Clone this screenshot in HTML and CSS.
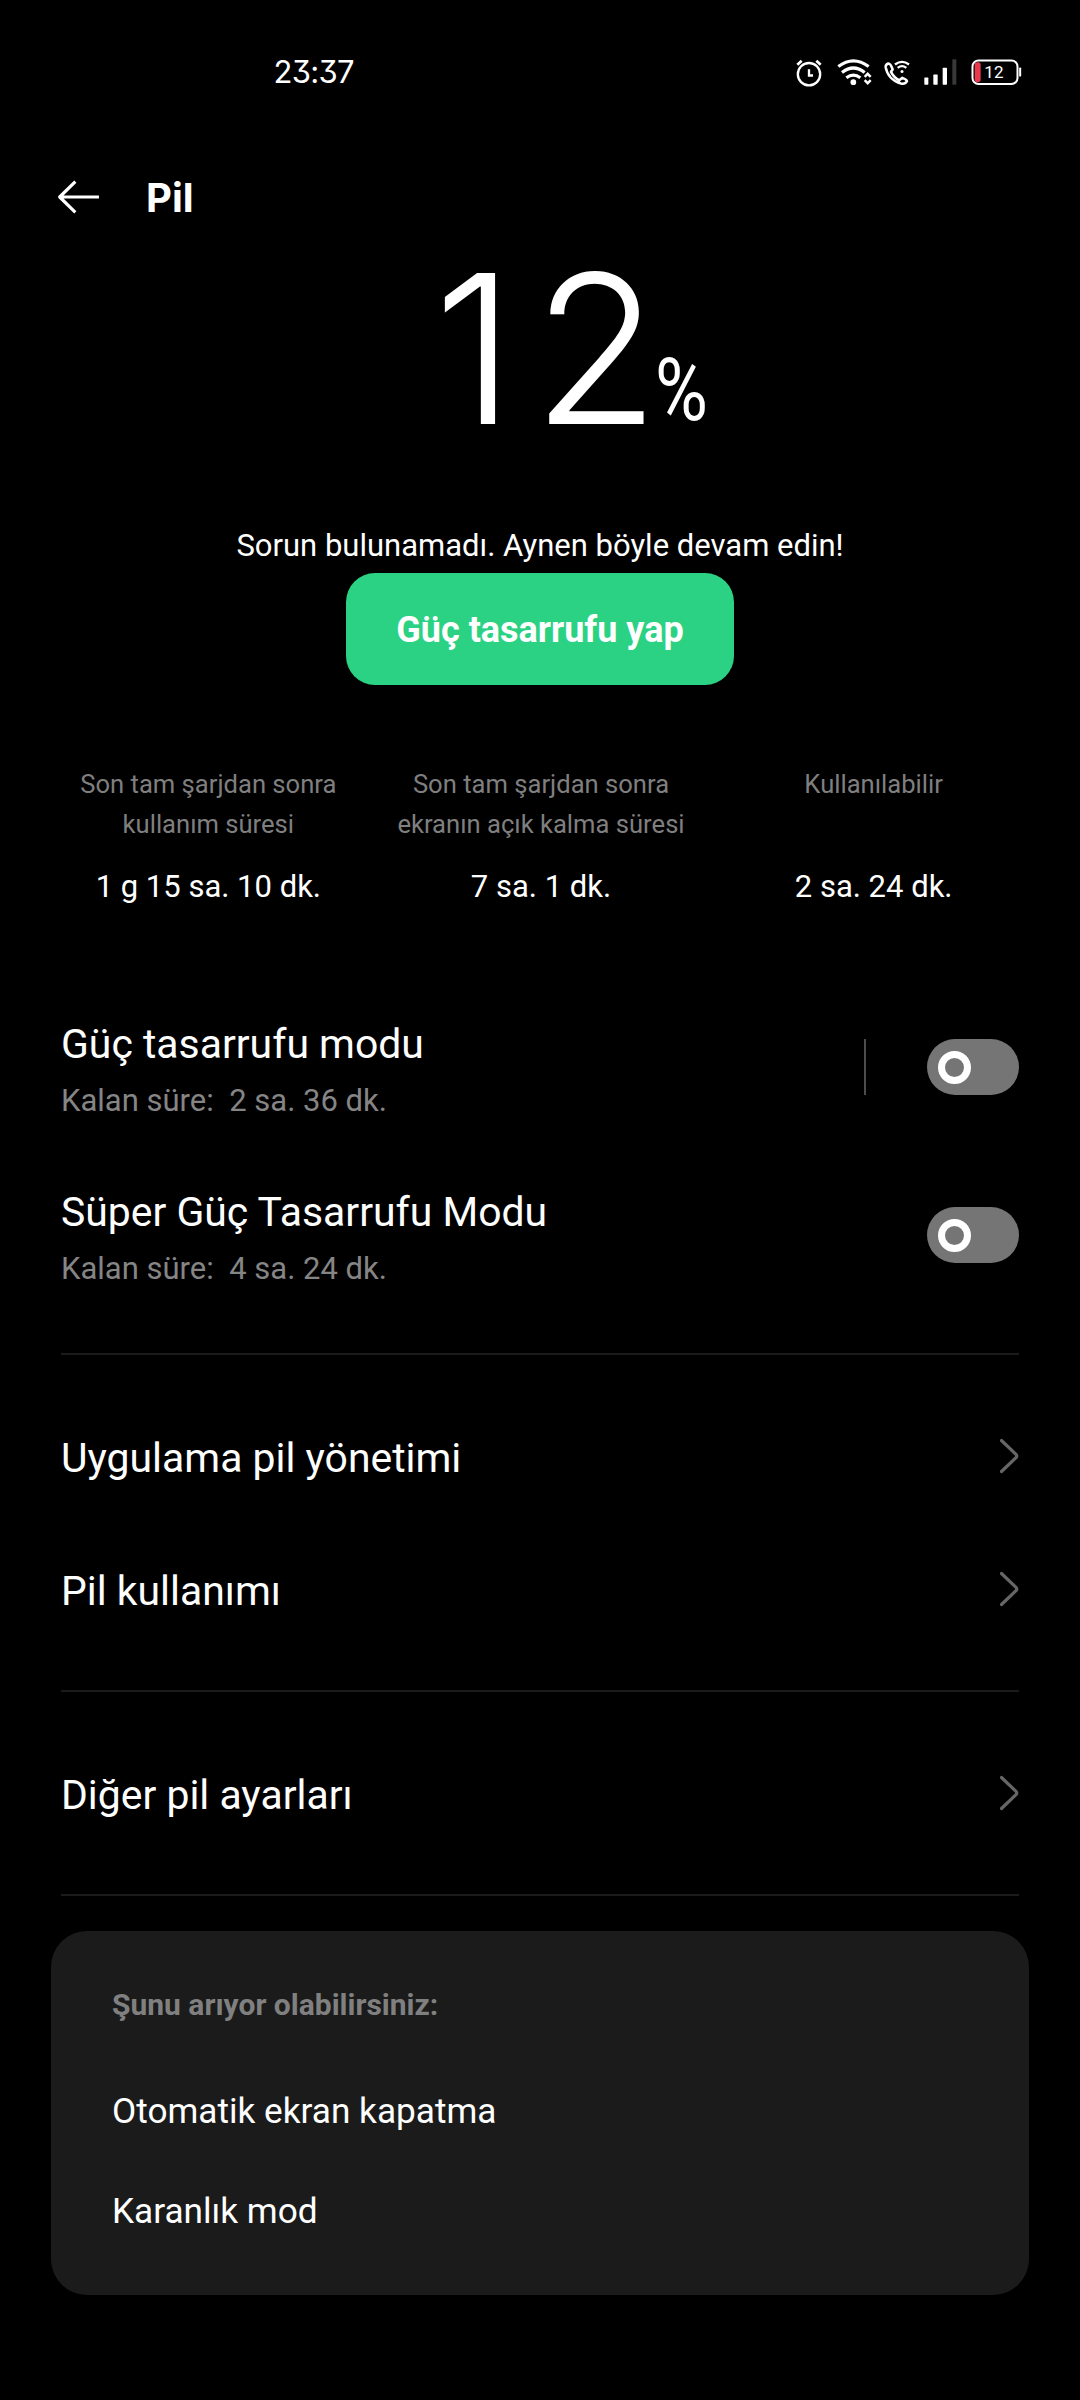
FILE: index.html
```html
<!DOCTYPE html>
<html lang="tr">
<head>
<meta charset="utf-8">
<title>Pil</title>
<link rel="stylesheet" href="styles.css">
</head>
<body>
<div class="status">
  <span class="clock">23:37</span>
  <div class="status-icons">
    <svg class="alarm" viewBox="44 46.5 84 96" fill="none" stroke="#fff" stroke-width="7">
      <circle cx="86" cy="101" r="33.5"/>
      <path d="M51 73l13-12M121 73l-13-12" stroke-width="8"/>
      <path d="M86 86v19h12" stroke-width="7"/>
    </svg>
    <svg class="wifi" viewBox="167 46.5 111 96" fill="none" stroke="#fff" stroke-width="9.5">
      <path d="M174 78Q219 44 265 78M185 96Q219 69 253 96M198 112Q219 96 240 112"/>
      <circle cx="219" cy="125" r="8.5" fill="#fff" stroke="none"/>
      <path d="M253 109l9-9 9 9M253 119l9 9 9-9" stroke-width="7.5"/>
    </svg>
    <svg class="call" viewBox="308 46.5 84 96" fill="none" stroke="#fff" stroke-width="7.5" stroke-linejoin="round">
      <path d="M324 69Q315 72 316 80C320 103 337 122 362 129Q374 132 380 122Q379 117 366 112L357 119Q341 112 332 94L337 87Q331 69 324 69Z"/>
      <path d="M344 72Q365 56 386 72M352 82Q365 72 378 82" stroke-width="7"/>
      <circle cx="365" cy="93" r="4.5" fill="#fff" stroke="none"/>
    </svg>
    <svg class="signal" viewBox="428 46.5 102 96" fill="#fff">
      <rect x="432" y="111" width="12" height="21.500" rx="2"/>
      <rect x="459" y="102" width="13" height="30.500" rx="2"/>
      <rect x="487" y="82" width="13" height="50.500" rx="2"/>
      <rect x="516" y="56" width="12" height="76.500" rx="2" fill="#383838"/>
    </svg>
    <svg class="battery" viewBox="572 46.5 153 96">
      <rect x="576.500" y="60" width="135" height="70.500" rx="18" fill="none" stroke="#fff" stroke-width="6"/>
      <rect x="583" y="65" width="18" height="60" rx="8" fill="#e8394d"/>
      <rect x="716.500" y="81" width="6" height="27" rx="2.500" fill="#fff"/>
      <text class="battery-level" x="612" y="111">12</text>
    </svg>
  </div>
</div>
<header class="bar">
  <svg class="back" viewBox="172 418 130 108" fill="none" stroke="#fff" stroke-width="9.5" stroke-linejoin="round">
    <path d="M298 472H181M227 426L180 472L227 518"/>
  </svg>
  <h1>Pil</h1>
</header>
<main>
  <div class="level">12<span class="percent">%</span></div>
  <p class="message">Sorun bulunamadı. Aynen böyle devam edin!</p>
  <button class="save">Güç tasarrufu yap</button>
  <div class="stats">
    <div class="stat"><p class="stat-label">Son tam şarjdan sonra<br>kullanım süresi</p><p class="stat-value">1 g 15 sa. 10 dk.</p></div>
    <div class="stat"><p class="stat-label">Son tam şarjdan sonra<br>ekranın açık kalma süresi</p><p class="stat-value">7 sa. 1 dk.</p></div>
    <div class="stat"><p class="stat-label">Kullanılabilir</p><p class="stat-value">2 sa. 24 dk.</p></div>
  </div>
  <section class="modes">
    <div class="mode">
      <div class="mode-text"><p class="mode-title">Güç tasarrufu modu</p><p class="mode-sub">Kalan süre:&nbsp; 2 sa. 36 dk.</p></div>
      <span class="separator"></span>
      <span class="toggle"><span class="knob"></span></span>
    </div>
    <div class="mode">
      <div class="mode-text"><p class="mode-title">Süper Güç Tasarrufu Modu</p><p class="mode-sub">Kalan süre:&nbsp; 4 sa. 24 dk.</p></div>
      <span class="toggle"><span class="knob"></span></span>
    </div>
  </section>
  <section class="links">
    <div class="link"><span>Uygulama pil yönetimi</span><svg class="chevron" viewBox="0 0 19 36"><path d="M1.500 2.500L16 16.300Q17.500 18 16 19.700L1.500 33.500"/></svg></div>
    <div class="link"><span>Pil kullanımı</span><svg class="chevron" viewBox="0 0 19 36"><path d="M1.500 2.500L16 16.300Q17.500 18 16 19.700L1.500 33.500"/></svg></div>
  </section>
  <section class="links">
    <div class="link"><span>Diğer pil ayarları</span><svg class="chevron" viewBox="0 0 19 36"><path d="M1.500 2.500L16 16.300Q17.500 18 16 19.700L1.500 33.500"/></svg></div>
  </section>
  <section class="suggestions">
    <h2>Şunu arıyor olabilirsiniz:</h2>
    <p>Otomatik ekran kapatma</p>
    <p>Karanlık mod</p>
  </section>
</main>
</body>
</html>
```
FILE: styles.css
```css
* { box-sizing: border-box; margin: 0; padding: 0; }
body { width: 1080px; height: 2400px; background: #000; color: #fff; font-family: Roboto, sans-serif; overflow: hidden; }
svg { display: block; flex: none; }

.status { height: 143px; display: flex; align-items: center; justify-content: space-between; padding: 0 58.3px 0 273.5px; }
.clock { font: 400 31px/40px Inter, sans-serif; font-feature-settings: "cv09"; letter-spacing: -0.7px; }
.status-icons { display: flex; align-items: center; }
.status-icons svg { height: 32px; }
.alarm { width: 28px; margin-right: 13px; }
.wifi { width: 37px; margin-right: 10px; }
.call { width: 28px; margin-right: 12px; }
.signal { width: 34px; margin-right: 14px; }
.battery { width: 51px; }
.battery-level { font: 400 51px Roboto, sans-serif; fill: #fff; }

.bar { height: 108px; display: flex; align-items: center; gap: 45.4px; padding-left: 57.3px; }
.back { width: 43.3px; height: 36px; }
.bar h1 { font: 700 40px/56px Inter, sans-serif; padding-top: 1px; }

.level { height: 195px; padding-left: 433.5px; font: 300 207px/195px Inter, sans-serif; letter-spacing: 17.6px; white-space: nowrap; }
.percent { display: inline-block; margin-left: -22px; font: 400 88px/88px Roboto, sans-serif; letter-spacing: 0; vertical-align: 4px; transform: scaleX(.82); transform-origin: left; }

.message { margin-top: 72px; font-size: 31px; line-height: 56px; text-align: center; }
.save { display: block; width: 388px; height: 112px; margin: -1px auto 0; padding-top: 2px; border: 0; border-radius: 29px; background: #2bd283; color: #fff; font: 700 36px/56px Roboto, sans-serif; }

.stats { display: grid; grid-template-columns: repeat(3, 1fr); margin-top: 79px; padding: 0 40px 0 42px; text-align: center; }
.stat-label { min-height: 80px; font-size: 25.6px; line-height: 40px; color: #7f7f7f; }
.stat-value { margin-top: 23px; font-size: 31px; line-height: 40px; }

.modes, .links { margin: 0 61px; border-bottom: 2px solid #1b1b1b; }
.modes { margin-top: 76px; padding-bottom: 34px; }
.mode { height: 168px; display: flex; align-items: center; }
.mode-text { flex: 1; padding-top: 12px; }
.mode-title { font-size: 40.9px; line-height: 55px; }
.mode-sub { font-size: 31px; line-height: 57px; color: #858585; }
.separator { width: 2px; height: 56px; margin-right: 61px; background: #4c4c4c; }
.toggle { width: 92px; height: 56px; display: flex; align-items: center; padding-left: 11px; border-radius: 28px; background: #757575; }
.knob { width: 33px; height: 33px; border: 7px solid #fff; border-radius: 50%; }

.links { padding: 34px 0; }
.link { height: 133.5px; display: flex; align-items: center; justify-content: space-between; font-size: 40.9px; line-height: 56px; }
.link span { padding-top: 4px; }
.chevron { width: 19px; height: 36px; fill: none; stroke: #666; stroke-width: 3.2; stroke-linecap: round; }

.suggestions { height: 364px; margin: 35px 51px 0; padding: 44px 61px 0; border-radius: 36px; background: #1b1b1b; }
.suggestions h2 { margin-bottom: 26px; font-size: 30px; line-height: 60px; font-weight: 700; color: #808080; }
.suggestions p { font-size: 35.2px; line-height: 100px; }
```
